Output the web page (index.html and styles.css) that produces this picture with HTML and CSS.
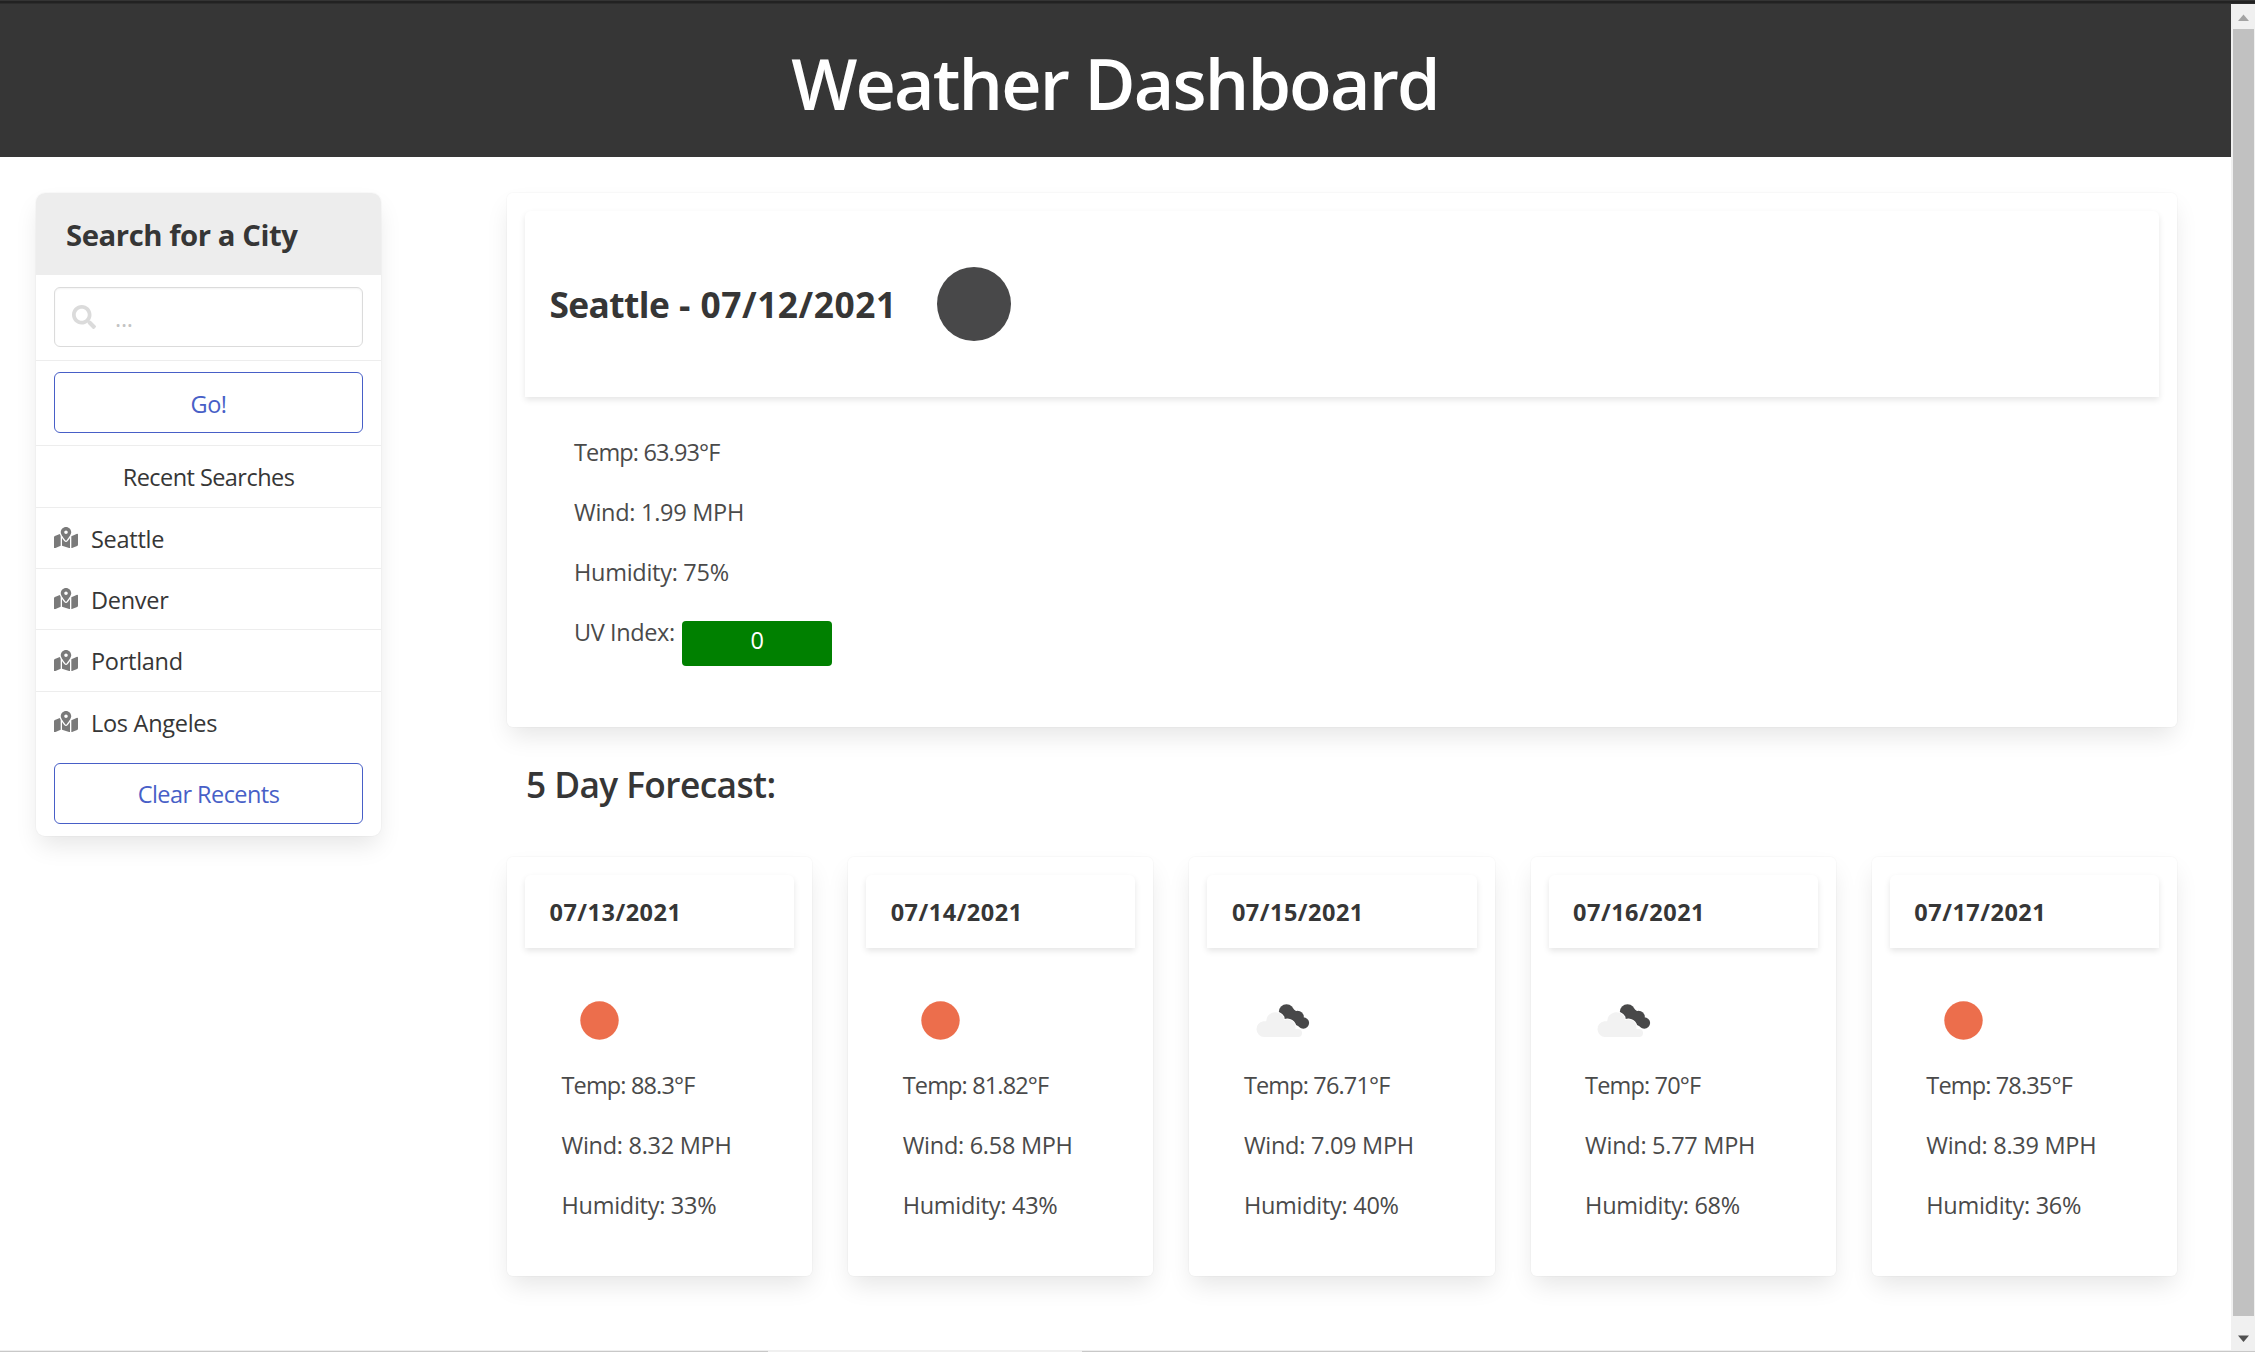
FILE: index.html
```html
<!DOCTYPE html>
<html lang="en">
<head>
<meta charset="utf-8">
<title>Weather Dashboard</title>
<link rel="stylesheet" href="styles.css">
</head>
<body>
<svg class="sprite" aria-hidden="true">
  <symbol id="search" viewBox="0 0 512 512"><path d="M505 442.700L405.300 343c-4.500-4.500-10.600-7-17-7H372c27.600-35.300 44-79.700 44-128C416 93.100 322.900 0 208 0S0 93.100 0 208s93.100 208 208 208c48.300 0 92.700-16.400 128-44v16.300c0 6.400 2.500 12.500 7 17l99.700 99.700c9.400 9.400 24.600 9.400 33.900 0l28.300-28.300c9.400-9.400 9.400-24.600.1-34zM208 336c-70.700 0-128-57.200-128-128 0-70.700 57.200-128 128-128 70.700 0 128 57.200 128 128 0 70.700-57.200 128-128 128z"/></symbol>
  <symbol id="map" viewBox="0 0 576 512"><path d="M288 0c-69.590 0-126 56.410-126 126 0 56.260 82.350 158.800 113.900 196.020 6.390 7.540 17.820 7.540 24.200 0C331.650 284.800 414 182.260 414 126 414 56.410 357.590 0 288 0zm0 168c-23.200 0-42-18.800-42-42s18.800-42 42-42 42 18.800 42 42-18.800 42-42 42zM20.120 215.950A32.006 32.006 0 0 0 0 245.660v250.320c0 11.320 11.430 19.060 21.940 14.860L160 448V214.920c-8.840-15.980-16.070-31.540-21.250-46.420L20.120 215.950zM288 359.670c-14.070 0-27.380-6.180-36.510-16.960-19.660-23.200-40.570-49.620-59.490-76.720v182l192 64V266c-18.920 27.090-39.820 53.520-59.490 76.720-9.130 10.770-22.440 16.950-36.510 16.950zm266.060-198.510L416 224v288l139.880-55.950A31.996 31.996 0 0 0 576 426.340V176.020c0-11.320-11.430-19.060-21.940-14.860z"/></symbol>
  <symbol id="sun" viewBox="0 0 75 75"><circle cx="37.500" cy="37.500" r="19.200" fill="#ec6e4c"/></symbol>
  <symbol id="clouds" viewBox="0 0 75 75">
    <g fill="#484849"><circle cx="42.500" cy="29" r="7.700"/><circle cx="53.500" cy="34" r="6.300"/><circle cx="59.300" cy="40" r="5.800"/><path d="M38 35L58 45L59 33L45 23Z"/></g>
    <path d="M20 54a7.900 7.900 0 0 1-.8-15.700q1.900-.2 3-.1A9.200 9.200 0 0 1 39.500 34l.5 3.200a8 8 0 0 1 11.500 7.500q0 .6-.1 1.300h2.600a4 4 0 0 1 0 8Z" fill="#f2f2f2" stroke="#fff" stroke-width="1.800"/>
    <path d="M20 54a7.900 7.900 0 0 1-.8-15.700q1.900-.2 3-.1A9.200 9.200 0 0 1 39.500 34l.5 3.200a8 8 0 0 1 11.500 7.500q0 .6-.1 1.300h2.600a4 4 0 0 1 0 8Z" fill="#f2f2f2"/>
  </symbol>
</svg>
<div class="top-edge"></div>
<div class="viewport">
  <div class="page">
    <header class="hero"><h1>Weather Dashboard</h1></header>
    <div class="columns">
      <nav class="panel">
        <h2 class="panel-heading">Search for a City</h2>
        <div class="panel-block search-block"><label class="field"><svg class="search-icon"><use href="#search"/></svg><span>...</span></label></div>
        <div class="panel-block go-block"><button class="button">Go!</button></div>
        <div class="panel-block recent-title">Recent Searches</div>
        <a class="panel-block city"><svg class="map-icon"><use href="#map"/></svg><span>Seattle</span></a>
        <a class="panel-block city"><svg class="map-icon"><use href="#map"/></svg><span>Denver</span></a>
        <a class="panel-block city"><svg class="map-icon"><use href="#map"/></svg><span>Portland</span></a>
        <a class="panel-block city last"><svg class="map-icon"><use href="#map"/></svg><span>Los Angeles</span></a>
        <div class="clear-block"><button class="button">Clear Recents</button></div>
      </nav>
      <main class="content">
        <section class="card current">
          <div class="card-header current-header"><h2><span class="city-name">Seattle</span> - 07/12/2021</h2><svg class="current-icon" viewBox="0 0 150 150"><circle cx="75" cy="75" r="37" fill="#484849"/></svg></div>
          <div class="current-body">
            <p class="temp">Temp: 63.93°F</p><p>Wind: 1.99 MPH</p><p>Humidity: 75%</p>
            <div class="uv"><p>UV Index:</p><span class="uv-badge">0</span></div>
          </div>
        </section>
        <h3 class="forecast-title">5 Day Forecast:</h3>
        <section class="forecast">
          <article class="card day"><div class="card-header">07/13/2021</div><div class="day-body"><svg class="day-icon"><use href="#sun"/></svg><p class="temp">Temp: 88.3°F</p><p>Wind: 8.32 MPH</p><p>Humidity: 33%</p></div></article>
          <article class="card day"><div class="card-header">07/14/2021</div><div class="day-body"><svg class="day-icon"><use href="#sun"/></svg><p class="temp">Temp: 81.82°F</p><p>Wind: 6.58 MPH</p><p>Humidity: 43%</p></div></article>
          <article class="card day"><div class="card-header">07/15/2021</div><div class="day-body"><svg class="day-icon"><use href="#clouds"/></svg><p class="temp">Temp: 76.71°F</p><p>Wind: 7.09 MPH</p><p>Humidity: 40%</p></div></article>
          <article class="card day"><div class="card-header">07/16/2021</div><div class="day-body"><svg class="day-icon"><use href="#clouds"/></svg><p class="temp">Temp: 70°F</p><p>Wind: 5.77 MPH</p><p>Humidity: 68%</p></div></article>
          <article class="card day"><div class="card-header">07/17/2021</div><div class="day-body"><svg class="day-icon"><use href="#sun"/></svg><p class="temp">Temp: 78.35°F</p><p>Wind: 8.39 MPH</p><p>Humidity: 36%</p></div></article>
        </section>
      </main>
    </div>
  </div>
  <div class="scrollbar">
    <svg class="arrow" viewBox="0 0 24 25"><path d="M7 17L12.500 10.500L18 17Z" fill="#a3a3a3"/></svg>
    <div class="thumb"></div>
    <svg class="arrow down" viewBox="0 0 24 25"><path d="M7 10.500L12.500 17L18 10.500Z" fill="#505050"/></svg>
  </div>
</div>
<div class="bottom-edge"><i></i></div>
</body>
</html>
```
FILE: styles.css
```css
* { box-sizing: border-box; margin: 0; padding: 0; }
html, body { height: 1352px; overflow: hidden; }
body {
  display: flex;
  flex-direction: column;
  background: #fff;
  color: #4a4a4a;
  font: 400 23.5px/36px "Open Sans", "Noto Sans", sans-serif;
  letter-spacing: -0.28px;
}
svg { display: block; flex: none; }
.sprite { width: 0; height: 0; }
.top-edge { height: 4px; background: linear-gradient(#343434 0 1px, #222 1px 3px, #2c2c2c 3px); flex: none; }
.viewport { display: flex; height: 1346px; }
.page { flex: 1; }
.hero {
  height: 152.500px;
  padding: 6px 1px 0 0;
  display: flex;
  align-items: center;
  justify-content: center;
  background: #363636;
}
.hero h1 { color: #fff; font-size: 70px; font-weight: 600; line-height: 80px; letter-spacing: -1.85px; }
.columns { display: flex; gap: 126px; padding: 36px 54px 0 36px; align-items: flex-start; }

.panel {
  width: 345px;
  border-radius: 9px;
  color: #363636;
  box-shadow: 0 12px 24px -3px rgba(10,10,10,.1), 0 0 0 1px rgba(10,10,10,.02);
}
.panel-heading {
  height: 82px;
  padding: 23px 30px 20px;
  background: #ededed;
  border-radius: 9px 9px 0 0;
  font-size: 29.3px;
  line-height: 39px;
  font-weight: 700;
  letter-spacing: -0.45px;
}
.panel-block { display: flex; align-items: center; padding: 0 18px; border-bottom: 1px solid #ededed; }
.search-block { height: 86px; }
.field {
  display: flex;
  align-items: center;
  width: 100%;
  height: 60px;
  padding-left: 17px;
  gap: 19px;
  border: 1px solid #dbdbdb;
  border-radius: 6px;
  box-shadow: inset 0 1px 2px rgba(10,10,10,.05);
  color: #c3c3c3;
}
.search-icon { width: 24px; height: 24px; fill: #dbdbdb; }
.field span { padding-top: 2px; }
.go-block { height: 85px; }
.button {
  width: 100%;
  height: 61px;
  padding-top: 2px;
  background: #fff;
  border: 1px solid #485fc7;
  border-radius: 6px;
  color: #485fc7;
  font: inherit;
  letter-spacing: -0.55px;
}
.recent-title { height: 62px; padding-top: 2px; justify-content: center; letter-spacing: -0.55px; }
.city { height: 61.400px; gap: 13px; }
.city span { padding-top: 2px; }
.city.last { height: 60px; border-bottom: 0; }
.map-icon { width: 24px; height: 21.300px; fill: #7a7a7a; }
.clear-block { padding: 11px 18px 12px; display: flex; }

.content { flex: 1; }
.card {
  padding: 18px;
  border-radius: 6px;
  box-shadow: 0 12px 24px -3px rgba(10,10,10,.1), 0 0 0 1px rgba(10,10,10,.02);
}
.card-header {
  display: flex;
  align-items: center;
  height: 73px;
  padding: 1px 0 0 24.500px;
  border-radius: 6px 6px 0 0;
  box-shadow: 0 3px 6px rgba(10,10,10,.1);
  color: #363636;
  font-weight: 700;
  letter-spacing: 0.5px;
}
.current { height: 534px; }
.current-header { height: 186.500px; }
.current-header h2 { width: 349.500px; font-size: 35.3px; line-height: 54px; letter-spacing: 0.55px; white-space: nowrap; }
.city-name { letter-spacing: -0.6px; }
.current-icon { width: 150px; height: 150px; }
.current-body { display: flex; flex-direction: column; gap: 24px; padding: 37px 0 0 49px; }
.temp { letter-spacing: -0.85px; }
.uv { display: flex; gap: 7px; }
.uv p { width: 101px; white-space: nowrap; letter-spacing: -0.4px; }
.uv-badge {
  width: 150px;
  height: 45px;
  margin-top: 7px;
  background: green;
  border-radius: 4px;
  color: #fff;
  line-height: 38px;
  text-align: center;
}
.forecast-title {
  padding: 30px 18px 46px 19px;
  color: #363636;
  font-size: 35.3px;
  font-weight: 600;
  line-height: 54px;
  letter-spacing: -0.6px;
}
.forecast { display: grid; grid-template-columns: repeat(5, 1fr); gap: 36px; }
.day { height: 419px; }
.day-body { display: flex; flex-direction: column; gap: 24px; padding: 35px 0 0 36.500px; }
.day-icon { width: 75px; height: 75px; margin-bottom: -15px; }

.scrollbar { width: 24px; display: flex; flex-direction: column; background: #f0f0f0; }
.arrow { width: 24px; height: 25px; }
.arrow.down { margin-top: auto; }
.thumb { height: 1287px; margin: 0 1px 0 2px; background: #c1c1c1; }
.bottom-edge { height: 2px; padding-left: 768px; background: linear-gradient(#eee 0 1px, #c8c8c8 1px); flex: none; }
.bottom-edge i { display: block; width: 314px; height: 2px; background: #f0f0f0; }
```
